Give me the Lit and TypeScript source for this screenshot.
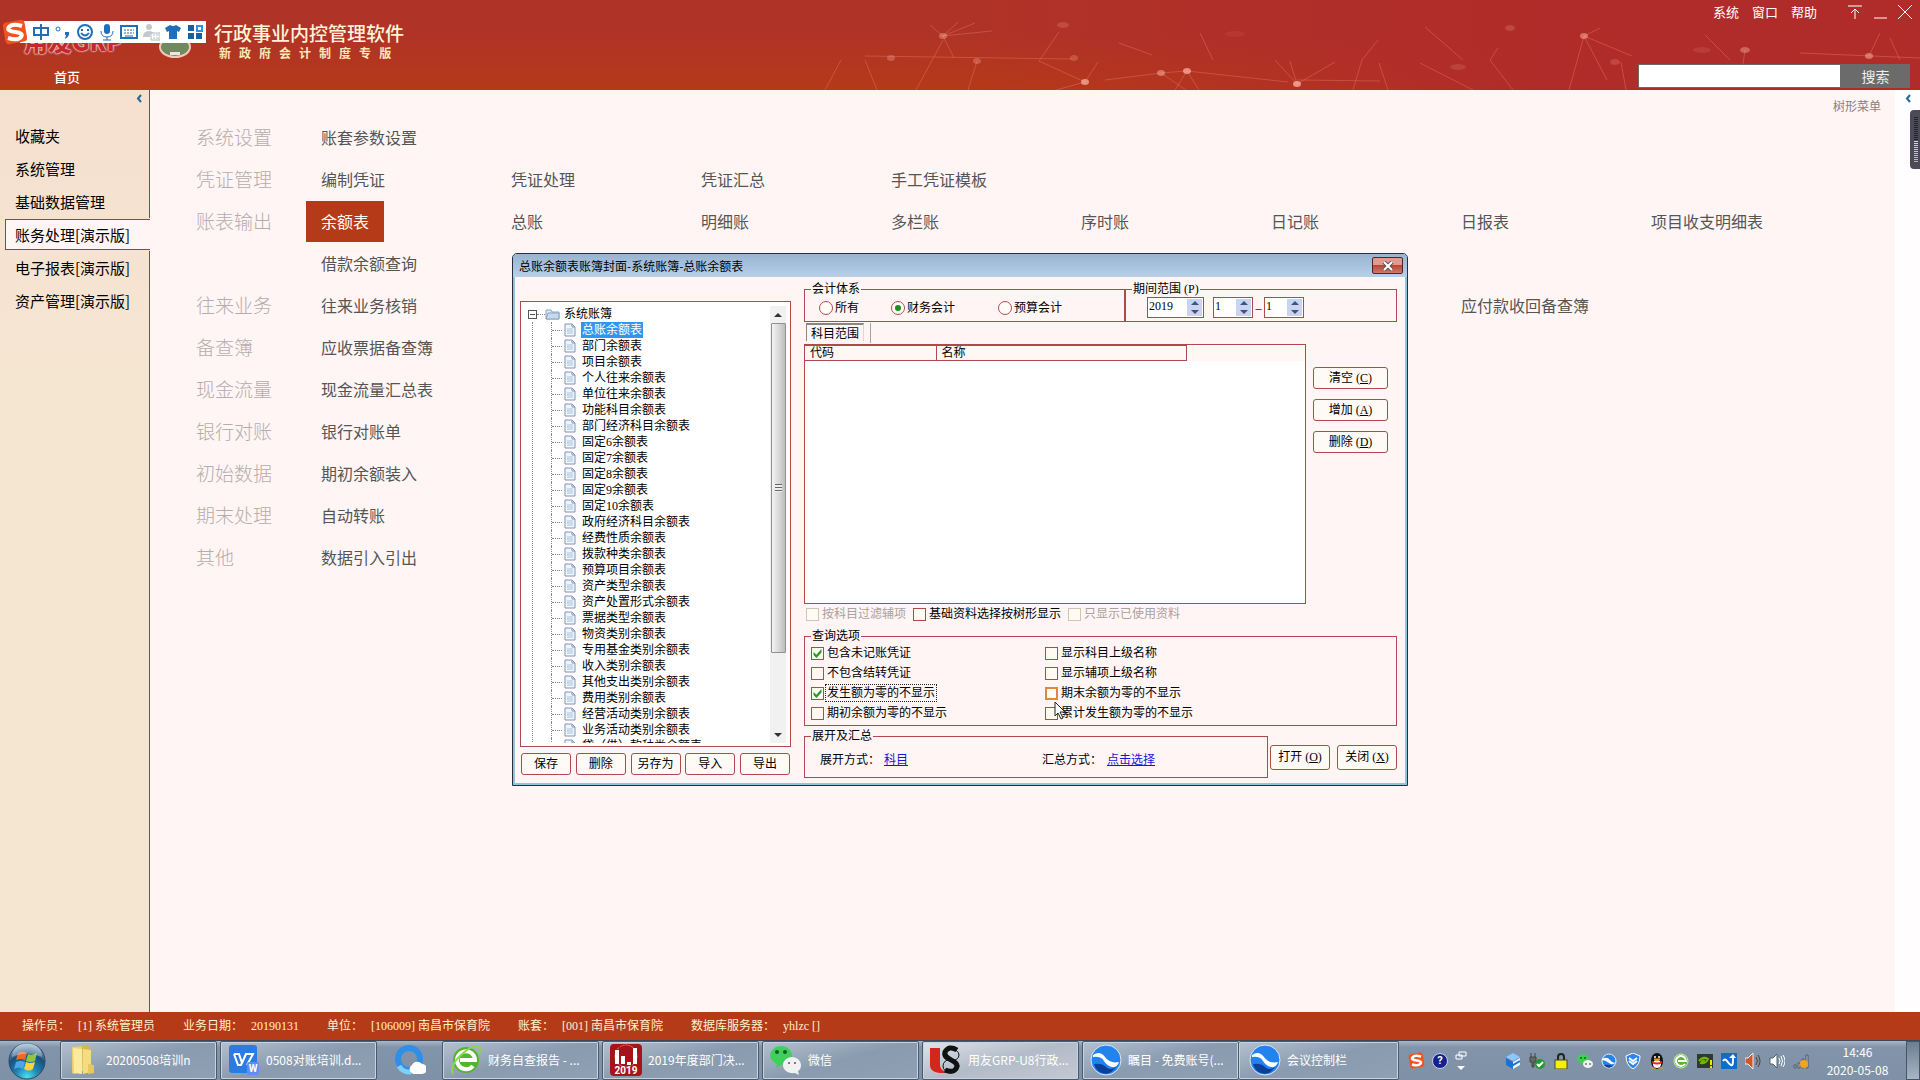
import { LitElement, html, css, svg, nothing } from "lit";
import { customElement, state } from "lit/decorators.js";
import { classMap } from "lit/directives/class-map.js";

const MODULES = ["收藏夹", "系统管理", "基础数据管理", "账务处理[演示版]", "电子报表[演示版]", "资产管理[演示版]"];

interface Group {
  title: string;
  items: string[];
}

const GROUPS: Group[] = [
  { title: "系统设置", items: ["账套参数设置"] },
  { title: "凭证管理", items: ["编制凭证", "凭证处理", "凭证汇总", "手工凭证模板"] },
  { title: "账表输出", items: ["余额表", "总账", "明细账", "多栏账", "序时账", "日记账", "日报表", "项目收支明细表"] },
  { title: "", items: ["借款余额查询"] },
  { title: "往来业务", items: ["往来业务核销", "", "", "", "", "", "应付款收回备查簿"] },
  { title: "备查簿", items: ["应收票据备查簿"] },
  { title: "现金流量", items: ["现金流量汇总表"] },
  { title: "银行对账", items: ["银行对账单"] },
  { title: "初始数据", items: ["期初余额装入"] },
  { title: "期末处理", items: ["自动转账"] },
  { title: "其他", items: ["数据引入引出"] },
];

const BOOKS = [
  "总账余额表", "部门余额表", "项目余额表", "个人往来余额表", "单位往来余额表", "功能科目余额表",
  "部门经济科目余额表", "固定6余额表", "固定7余额表", "固定8余额表", "固定9余额表", "固定10余额表",
  "政府经济科目余额表", "经费性质余额表", "拨款种类余额表", "预算项目余额表", "资产类型余额表",
  "资产处置形式余额表", "票据类型余额表", "物资类别余额表", "专用基金类别余额表", "收入类别余额表",
  "其他支出类别余额表", "费用类别余额表", "经营活动类别余额表", "业务活动类别余额表", "贷（借）款种类余额表",
];

const QUERY_OPTIONS = [
  { label: "包含未记账凭证", on: true },
  { label: "显示科目上级名称", on: false },
  { label: "不包含结转凭证", on: false },
  { label: "显示辅项上级名称", on: false },
  { label: "发生额为零的不显示", on: true, focus: true },
  { label: "期末余额为零的不显示", on: false, hot: true },
  { label: "期初余额为零的不显示", on: false },
  { label: "累计发生额为零的不显示", on: false },
];

const STATUS = [
  ["操作员：", "[1] 系统管理员"],
  ["业务日期：", "20190131"],
  ["单位：", "[106009] 南昌市保育院"],
  ["账套：", "[001] 南昌市保育院"],
  ["数据库服务器：", "yhlzc []"],
];

/* Decorative constellation on the right of the banner: [x1, y1, x2, y2]. */
const LINKS = [
  [123, 36, 110, 25], [123, 36, 138, 22], [123, 36, 155, 23], [123, 36, 172, 31], [123, 36, 134, 58],
  [123, 40, 96, 90], [219, 61, 239, 32], [219, 61, 265, 82], [45, 56, 252, 59], [265, 82, 236, 90],
  [265, 82, 278, 62], [367, 71, 468, 82], [341, 73, 285, 80], [341, 73, 367, 71], [367, 71, 355, 90],
  [367, 71, 379, 90], [341, 73, 366, 90], [477, 84, 455, 60], [477, 84, 470, 61], [477, 84, 515, 62],
  [477, 80, 560, 81], [21, 60, 5, 90], [45, 60, 57, 90], [157, 61, 148, 90], [299, 43, 332, 55],
  [380, 33, 393, 60], [605, 27, 643, 60], [600, 63, 653, 90], [764, 36, 780, 28], [764, 36, 812, 56],
  [764, 36, 749, 90], [764, 36, 787, 80], [670, 60, 693, 90], [670, 60, 678, 48], [558, 40, 542, 60],
  [542, 60, 533, 90], [559, 63, 568, 90], [801, 62, 806, 90], [1049, 56, 1060, 33], [1070, 38, 1080, 60],
  [980, 53, 1100, 58], [885, 35, 910, 60], [925, 50, 923, 64],
];
const NODES = [
  [123, 36, 4, 0.4], [71, 58, 4, 0.3], [157, 61, 4, 0.3], [243, 25, 6, 0.2], [254, 58, 4, 0.25], [265, 82, 4, 0.7],
  [341, 73, 4, 0.5], [367, 71, 4, 0.7], [477, 84, 4, 0.75], [764, 36, 4, 0.5], [690, 28, 5, 0.2], [638, 67, 8, 0.15],
  [925, 50, 5, 0.4], [1049, 56, 4, 0.5], [882, 50, 9, 0.12], [795, 62, 5, 0.2], [415, 34, 10, 0.07],
];

const orb = html`<svg viewBox="0 0 38 38" class="i38">
  <defs>
    <radialGradient id="og" cx=".5" cy=".95" r=".9">
      <stop offset="0" stop-color="#4fe0f4" /><stop offset=".35" stop-color="#1f86b4" />
      <stop offset=".7" stop-color="#1b4f7c" /><stop offset="1" stop-color="#8fb2cc" />
    </radialGradient>
  </defs>
  <circle cx="19" cy="19" r="18" fill="url(#og)" stroke="#284a68" />
  <path d="M10 11q5-3 9 0l-2 7q-4-2-9 0z" fill="#ee6a2c" />
  <path d="M20 12q4 2 9-1l-2 8q-4 2-9 0z" fill="#8ec63f" />
  <path d="M8 20q4-2 9 0l-2 7q-4-3-9 0z" fill="#4aa6e8" />
  <path d="M18 20q4 2 9 0l-2 7q-4 3-9 0z" fill="#fdd23c" />
  <path d="M4 15a15 15 0 0 1 30 0q-15-7-30 0z" fill="#fff" opacity=".3" />
</svg>`;

const folder = html`<svg viewBox="0 0 32 32" class="i32">
  <path d="M4 3l11-1v25l-9 3-2-1z" fill="#e9cf6b" /><path d="M14 2h8v24l-7 4z" fill="#d8b64a" />
  <path d="M5 4l9 1v25l-8-1z" fill="#faeaa0" /><path d="M15 5l8 1v22l-8 2z" fill="#f4dc83" />
  <path d="M20 20l6 1v8l-6 1z" fill="#e6c85c" />
</svg>`;

const wps = html`<svg viewBox="0 0 32 32" class="i32">
  <rect x="1" y="1" width="28" height="28" rx="3" fill="#2b7be4" />
  <path d="M6 10h5l3 9 4-9h7l-6 11M18 10l-5 11h-3L6 10" fill="none" stroke="#fff" stroke-width="2" />
  <rect x="19" y="18" width="12" height="13" rx="2" fill="#5b90f5" />
  <text x="25" y="28" text-anchor="middle" font-size="10" font-weight="700" fill="#fff" font-family="Roboto, sans-serif">W</text>
</svg>`;

const qbrowser = html`<svg viewBox="0 0 32 32" class="i32">
  <circle cx="15" cy="15" r="11" fill="none" stroke="#2f8fe8" stroke-width="6" />
  <path d="M5 22a12 12 0 0 0 12 6" fill="none" stroke="#7dd0fa" stroke-width="5" />
  <path d="M19 30a5 5 0 0 1-1-9 6 6 0 0 1 10-1 5 5 0 0 1 0 10z" fill="#fff" />
</svg>`;

const browserE = html`<svg viewBox="0 0 32 32" class="i32">
  <circle cx="16" cy="16" r="13" fill="#52b52c" />
  <path d="M23 22a9 9 0 1 1 2-6H10" fill="none" stroke="#fff" stroke-width="4" />
  <path d="M27 3q5-1 2 7M3 30q-4-8 8-19T28 3" fill="none" stroke="#8ed44d" stroke-width="2" />
</svg>`;

const report = html`<svg viewBox="0 0 32 32" class="i32">
  <rect width="32" height="32" rx="4" fill="#a6131b" />
  <circle cx="16" cy="12" r="11" fill="none" stroke="#e4868a" stroke-dasharray="2 1" />
  <path d="M7 6v14M13 12v8M19 18v3M25 4v16" stroke="#fff" stroke-width="4" />
  <text x="16" y="30" text-anchor="middle" font-size="10" font-weight="700" fill="#fff" font-family="Roboto, sans-serif">2019</text>
</svg>`;

const wechat = html`<svg viewBox="0 0 32 32" class="i32">
  <path d="M11 2c6 0 11 4 11 10s-5 9-11 9l-5 3 1-4C3 18 0 15 0 11 1 6 5 2 11 2z" fill="#3fd05c" />
  <circle cx="7" cy="8" r="2" fill="#165c25" /><circle cx="15" cy="8" r="2" fill="#165c25" />
  <path d="M22 13c5 0 9 4 9 8 0 3-1 5-3 6l1 4-4-2c-7 1-12-3-12-8 0-4 4-8 9-8z" fill="#f1f1f1" />
  <circle cx="19" cy="19" r="1" fill="#555" /><circle cx="25" cy="19" r="1" fill="#555" />
</svg>`;

const u8 = html`<svg viewBox="0 0 32 32" class="i32">
  <path d="M0 4h10v17q0 5 6 7v1Q0 30 0 21z" fill="#d5261b" />
  <ellipse cx="21" cy="11" rx="8" ry="6" fill="none" stroke="#111" stroke-width="1" />
  <ellipse cx="21" cy="22" rx="8" ry="7" fill="none" stroke="#111" stroke-width="1" />
  <path d="M27 6q-8-5-12 2c-2 7 12 8 12 14q-2 8-12 4" fill="none" stroke="#111" stroke-width="5" />
</svg>`;

const zhumu = html`<svg viewBox="0 0 32 32" class="i32">
  <circle cx="16" cy="16" r="15" fill="#2383ee" stroke="#dfe9f5" stroke-width="1" />
  <path d="M3 11q7-5 12 2t14 5q-2 6-7 5-5-1-8-6T3 13z" fill="#fff" />
  <path d="M4 20q8-1 12 3t10 0q-6 9-14 6-6-2-8-9z" fill="#0c3f9a" />
</svg>`;

const TASKS = [
  { icon: folder, label: "20200508培训n" },
  { icon: wps, label: "0508对账培训.d..." },
  { icon: qbrowser, label: "", bare: true },
  { icon: browserE, label: "财务自查报告 - ..." },
  { icon: report, label: "2019年度部门决..." },
  { icon: wechat, label: "微信" },
  { icon: u8, label: "用友GRP-U8行政...", active: true },
  { icon: zhumu, label: "瞩目 - 免费账号(..." },
  { icon: zhumu, label: "会议控制栏", last: true },
];

const sogou = (cls: string) => html`<svg viewBox="0 0 26 26" class=${cls}>
  <rect x="2" y="2" width="22" height="22" rx="4" fill="#f0531e" transform="rotate(-10 13 13)" />
  <path d="M20 7Q10 4 7 8t6 5 6 5-13 1" fill="none" stroke="#fff" stroke-width="4" />
</svg>`;

const TRAY = [
  svg`<path d="M8 0l7 4-7 4-7-4z" fill="#8cc8ff"/><path d="M1 5l7 4v7l-7-4z" fill="#1673d8"/><path d="M15 5L8 9v7l7-4z" fill="#e8f4ff"/><path d="M1 8l7 4 7-4" stroke="#1673d8" stroke-width="2" fill="none"/>`,
  svg`<path d="M2 0v4M6 0v4M1 4h6v5H5v5H3V9H1z" stroke="#444" fill="#666"/><circle cx="11" cy="11" r="5" fill="#219a2c"/><path d="M8 11l2 2 4-4" stroke="#fff" stroke-width="2" fill="none"/>`,
  svg`<path d="M5 8V4q0-3 3-3t3 3v4" fill="none" stroke="#222" stroke-width="2"/><rect x="2" y="7" width="12" height="9" fill="#f7f000" stroke="#444"/>`,
  svg`<ellipse cx="6" cy="6" rx="6" ry="5" fill="#3fcf53"/><ellipse cx="11" cy="11" rx="5" ry="4" fill="#eef3ee"/><circle cx="4" cy="5" r="1" fill="#1b5e20"/><circle cx="8" cy="5" r="1" fill="#1b5e20"/><circle cx="9" cy="11" r="1" fill="#777"/><circle cx="13" cy="11" r="1" fill="#777"/>`,
  svg`<circle cx="8" cy="8" r="7" fill="#2383ee" stroke="#e4eefa"/><path d="M1 6q5-3 8 1t6 2q-3 4-7 1T1 7z" fill="#fff"/><path d="M3 12q4-1 9 1-5 4-9-1z" fill="#123f8f"/>`,
  svg`<path d="M8 0l7 3q0 9-7 13Q1 12 1 3z" fill="#2f86ea" stroke="#fff"/><path d="M4 5l4 3 4-3M4 8l4 3 4-3" stroke="#fff" stroke-width="2" fill="none"/>`,
  svg`<ellipse cx="8" cy="8" rx="6" ry="8" fill="#111"/><ellipse cx="8" cy="11" rx="4" ry="4" fill="#fff"/><path d="M3 8q5 3 10 0v2q-5 3-10 0z" fill="#e22"/><circle cx="6" cy="4" r="1" fill="#fff"/><circle cx="10" cy="4" r="1" fill="#fff"/><path d="M5 6h6l-3 2zM2 15h5M9 15h5" fill="#f5a400" stroke="#f5a400"/>`,
  svg`<circle cx="8" cy="8" r="7" fill="#5cb531" stroke="#c9efad"/><path d="M12 11a5 5 0 1 1 1-3H5" fill="none" stroke="#fff" stroke-width="2"/>`,
  svg`<rect x="0" y="1" width="16" height="14" fill="#2e3a31"/><path d="M2 8q4-5 9-2-2 5-7 4 1-3 4-2" fill="none" stroke="#78b900" stroke-width="2"/><path d="M14 7v5M14 13v2" stroke="#fce300" stroke-width="2"/>`,
  svg`<rect width="16" height="16" fill="#0f6dc8"/><path d="M2 8q2-3 4 0t4 4 2-4V4" fill="none" stroke="#fff" stroke-width="2"/><path d="M8 5l4-4 3 4z" fill="#fff"/>`,
  svg`<path d="M0 5h3l5-5v16l-5-5H0z" fill="#d3552b" stroke="#eee"/><path d="M11 4q3 4 0 8M13 2q4 6 0 12" fill="none" stroke="#5b3b33"/>`,
  svg`<path d="M1 5h3l4-4v14l-4-4H1z" fill="#fff" stroke="#566"/><path d="M10 5q2 3 0 6M12 3q3 5 0 10M14 2q4 6 0 12" fill="none" stroke="#fff"/>`,
  svg`<path d="M1 12h2v3H1zM5 10h2v5H5zM9 6h2v9H9zM13 2h2v13h-2z" fill="#b9c4cf" stroke="#4c5a68"/><circle cx="11" cy="11" r="4" fill="#f6a21c"/>`,
];

const IME = [
  svg`<path d="M9 1v16M2 5h14v7H2z" fill="none" stroke="#1f6fba" stroke-width="2"/>`,
  svg`<circle cx="4" cy="6" r="2" fill="none" stroke="#1f6fba"/><path d="M11 9h4q1 4-4 7l1-4h-1z" fill="#1f6fba"/>`,
  svg`<circle cx="9" cy="9" r="7" fill="none" stroke="#1f6fba" stroke-width="2"/><path d="M6 6v2M12 6v2M5 10q4 5 8 0" fill="none" stroke="#1f6fba" stroke-width="2"/>`,
  svg`<rect x="6" y="1" width="6" height="10" rx="3" fill="#1f6fba"/><path d="M3 8q0 6 6 6t6-6M9 14v3M5 17h8" fill="none" stroke="#1f6fba" stroke-width="1"/>`,
  svg`<rect x="1" y="3" width="16" height="12" fill="none" stroke="#1f6fba" stroke-width="2"/><path d="M4 7h10M4 10h10" stroke="#1f6fba" stroke-dasharray="2 1"/><path d="M5 13h8" stroke="#1f6fba"/>`,
  svg`<circle cx="7" cy="4" r="3" fill="#c4c8cc"/><path d="M1 14q0-6 6-6 4 0 5 3H8v3z" fill="#c4c8cc"/><path d="M9 10h9v7H9zM11 12h2M11 15h2M14 12h3M14 15h3" fill="#fff" stroke="#b4bac0"/>`,
  svg`<path d="M6 2q3 2 6 0l5 3-2 4-2-1v8H5V8L3 9 1 5z" fill="#1f6fba"/>`,
  svg`<path d="M2 2h6v6H2zM2 10h6v6H2zM10 10h6v6h-6z" fill="#1c5f9e"/><rect x="11" y="3" width="5" height="5" fill="none" stroke="#2f8fe0" stroke-width="2"/>`,
];

const fileIcon = html`<svg class="file" viewBox="0 0 12 14">
  <path d="M1 1h7l3 3v9H1z" fill="#eef5fc" stroke="#8296b0" /><path d="M8 1v3h3" fill="none" stroke="#8296b0" />
  <path d="M3 6h6M3 8h6M3 10h6" stroke="#a9c3df" />
</svg>`;

@customElement("app-root")
export class AppRoot extends LitElement {
  @state() private module = 3;
  @state() private book = 0;

  static styles = css`
    :host {
      --line: #b04a4a;
      --brand: #b53a17;
      --paper: #fff5f4;
      --song: "Liberation Serif", "Noto Sans CJK SC", serif;
      display: flex;
      flex-direction: column;
      min-height: 100vh;
      position: relative;
      overflow: hidden;
      background: var(--paper);
      font-family: "Noto Sans CJK SC", sans-serif;
      color: #000;
    }
    * { box-sizing: border-box; }
    button, input { font: inherit; color: inherit; margin: 0; }
    button { cursor: pointer; padding: 0; border: 0; background: none; }
    ul { list-style: none; margin: 0; padding: 0; }
    svg { display: block; flex: none; }

    .banner {
      position: relative;
      display: flex;
      justify-content: space-between;
      height: 90px;
      color: #fff;
      background: linear-gradient(90deg, #b4391b00 50%, #b02c2a 80%), linear-gradient(#b03327 40%, #b53a17);
    }
    .stars { position: absolute; right: 0; top: 0; width: 1100px; height: 90px; }
    .brand { display: grid; grid-template-columns: 192px auto; column-gap: 22px; align-content: start; padding-top: 20px; }
    .logo { display: flex; justify-content: space-between; align-items: center; padding-left: 24px;
      font-size: 24px; line-height: 28px; font-weight: 900; color: #c8262c; white-space: nowrap; text-shadow: 0 0 2px #fff, 0 0 2px #fff; }
    .emblem { width: 34px; height: 36px; margin: -4px 0; }
    .names { display: flex; flex-direction: column; padding-top: 1px; }
    .name { font-size: 19px; line-height: 24px; font-weight: 500; color: #fff3d8; margin: 0; }
    .edition { display: flex; gap: 8px; padding-left: 5px; font-size: 12px; line-height: 16px; font-weight: 700; color: #fbe9b8; }
    .home { grid-column: 1; justify-self: start; margin: 4px 0 0 54px; font-size: 13px; line-height: 24px; font-weight: 500; color: #fff; text-decoration: none; }
    .corner { position: relative; display: flex; flex-direction: column; align-items: flex-end; justify-content: space-between; padding: 2px 10px 2px 0; }
    .tools { display: flex; align-items: center; gap: 13px; font-size: 13px; line-height: 20px; }
    .tools .space { width: 5px; }
    .win svg { width: 14px; height: 14px; margin-right: -2px; }
    .search { display: flex; height: 24px; }
    .search input { width: 203px; border: 1px solid #6b6b6b; background: #fff; outline: none; color: #333; padding: 0 4px; font-size: 13px; }
    .search button { width: 69px; background: #6b6b6b; color: #eee; font-size: 14px; line-height: 24px; }

    .ime { position: absolute; left: 2px; top: 19px; display: flex; align-items: center; }
    .ime .s26 { width: 26px; height: 26px; position: relative; z-index: 1; }
    .keys { display: flex; gap: 4px; background: #fff; height: 22px; align-items: center; padding: 0 2px 0 12px; margin-left: -8px; }
    .keys svg { width: 18px; height: 18px; }

    .main { flex: 1; display: flex; }
    .side { width: 150px; flex: none; display: flex; flex-direction: column; background: linear-gradient(#f6dfcf, #f5e6d2 30%); }
    .fold { align-self: stretch; height: 29px; border-right: 1px solid var(--brand); display: flex; justify-content: flex-end; padding: 4px 7px; }
    .fold svg, .edge svg { width: 6px; height: 9px; }
    .mods { display: flex; flex-direction: column; }
    .mod { height: 33px; display: flex; align-items: center; padding-left: 5px; border-right: 1px solid var(--brand); }
    .mod button { width: 100%; height: 31px; text-align: left; padding-left: 10px; font-size: 15px; line-height: 31px; white-space: nowrap; }
    .mod.on { border-right: 0; }
    .mod.on button { background: var(--paper); border: 1px solid var(--brand); border-right: 0; line-height: 29px; padding-left: 9px; }
    .side .rest { flex: 1; border-right: 1px solid var(--brand); }

    .content { flex: 1; min-width: 0; padding: 26px 0 0 46px; }
    .group { display: grid; grid-template-columns: 110px repeat(8, 190px); height: 42px; align-items: center; }
    .group h2 { margin: 0; font-size: 19px; line-height: 28px; font-weight: 300; color: #b5adad; }
    .entry { justify-self: start; padding: 0 15px; height: 41px; font-size: 16px; line-height: 41px; color: #555; text-decoration: none; white-space: nowrap; }
    .entry.on { background: var(--brand); color: #fff; }
    .rail { flex: none; display: flex; align-items: flex-start; }
    .treelink { font-size: 12px; line-height: 16px; color: #8b8080; padding: 8px 14px; text-decoration: none; }
    .edge { align-self: stretch; width: 25px; background: #fffdfd; display: flex; flex-direction: column; align-items: flex-end; }
    .edge svg { margin: 4px 9px 7px 0; }
    .meter { width: 10px; height: 59px; border-radius: 4px 0 0 4px; background: #4b4b57; padding: 7px 2px 7px 4px; }
    .meter div { height: 45px; background: repeating-linear-gradient(#4b4b5700 0 1px, #4b4b57 1px 2px), linear-gradient(#22222c 50%, #e6e67a 50%, #58e0b0); }

    .status { display: flex; gap: 28px; background: var(--brand); color: #fff2cf; padding: 0 22px; font: 12px/28px var(--song); }
    .status span { display: flex; gap: 8px; white-space: pre; }

    .taskbar { display: flex; height: 40px; background: linear-gradient(#a9b6c6, #8294aa 6px, #7f91a7); border-top: 1px solid #3c4757; color: #fff; }
    .start { width: 54px; display: flex; justify-content: center; align-items: center; margin-right: 6px; }
    .i38 { width: 38px; height: 38px; }
    .i32 { width: 32px; height: 32px; }
    .tasks { display: flex; gap: 3px; }
    .task { width: 157px; display: flex; align-items: center; gap: 6px; padding: 0 0 2px 7px; font-size: 12px; white-space: nowrap;
      border: 1px solid #4a596b; border-radius: 2px; box-shadow: inset 0 0 0 1px #c9d3de; background: linear-gradient(165deg, #b4c0ce, #8a9bb0 50%, #8fa0b4); }
    .task.on { background: linear-gradient(165deg, #dfe4ea, #b2bbc8 50%, #c3c9d3); }
    .task.bare { width: 59px; border: 0; box-shadow: none; background: none; padding-left: 14px; }
    .task.last { margin-left: -3px; border-left: 0; padding-left: 10px; width: 160px; }
    .tray { margin-left: auto; display: flex; align-items: center; }
    .lang { display: flex; align-items: center; gap: 7px; margin-right: 38px; }
    .s16 { width: 17px; height: 17px; }
    .q { width: 16px; height: 16px; border-radius: 50%; background: #14208c; border: 1px solid #c9d0ea; font: 700 11px/14px Roboto, sans-serif; text-align: center; }
    .mini { width: 12px; height: 20px; }
    .icons { display: flex; gap: 8px; }
    .icons svg { width: 16px; height: 16px; }
    .clock { width: 97px; text-align: center; font-size: 12px; line-height: 18px; }
    .desk { align-self: stretch; width: 14px; border: 1px solid #45556a; background: linear-gradient(#6d7d91, #a9b5c4); }

    .dialog { position: absolute; left: 512px; top: 253px; width: 896px; border: 1px solid #26303c; border-radius: 5px 5px 0 0; background: var(--paper);
      box-shadow: inset 0 0 0 2px #8fc4dc; font: 12px/14px var(--song); }
    .title { display: flex; justify-content: space-between; align-items: center; height: 23px; padding: 0 4px 0 6px; border-radius: 4px 4px 0 0;
      background: linear-gradient(#97b4d0, #b8d0ea); }
    .title h1 { margin: 0; font: 12px/16px "Noto Sans CJK SC", sans-serif; }
    .close { width: 31px; height: 17px; border: 1px solid #5c1f24; border-radius: 2px; background: linear-gradient(#e29a90 50%, #b8453a 50%, #d07a66); display: grid; place-items: center; }
    .close svg { width: 12px; height: 10px; }
    .body { display: flex; gap: 13px; padding: 5px 10px 7px 7px; }
    .left { width: 271px; flex: none; display: flex; flex-direction: column; justify-content: space-between; padding: 19px 0 3px; }
    .tree { height: 446px; border: 1px solid var(--line); background: #fff; padding: 4px 4px 3px 0; display: flex; }
    .nodes { flex: 1; overflow: hidden; }
    .root { display: flex; align-items: center; height: 16px; padding-left: 7px; }
    .box { width: 9px; height: 9px; border: 1px solid #555; background: linear-gradient(#555, #555) center / 5px 1px no-repeat #fff; }
    .root i { width: 8px; border-top: 1px dotted #888; }
    .root svg { width: 15px; height: 12px; margin-right: 4px; }
    .kids { margin-left: 11px; padding-left: 18px; border-left: 1px dotted #888; }
    .kid { display: flex; align-items: center; height: 16px; border-left: 1px dotted #888; }
    .kid i { width: 10px; border-top: 1px dotted #888; margin-right: 2px; }
    .file { width: 12px; height: 14px; margin-right: 5px; }
    .kid button { height: 16px; line-height: 16px; padding: 0 1px; white-space: nowrap; }
    .kid.on button { background: #3296f0; color: #fff; }
    .bar { width: 16px; background: #f1f1f1; display: flex; flex-direction: column; align-items: center; }
    .bar .up, .bar .down { width: 16px; height: 17px; display: grid; place-items: center; }
    .bar svg { width: 8px; height: 4px; }
    .thumb { width: 15px; height: 330px; border: 1px solid #909090; border-radius: 1px; background: linear-gradient(90deg, #f3f3f3, #dadada 50%, #bdbdbd); display: grid; place-items: center; }
    .grip { width: 7px; height: 8px; background: repeating-linear-gradient(#666 0 1px, #eee 1px 3px); }
    .bar .down { margin-top: auto; }
    .row { display: flex; justify-content: space-between; padding: 0 1px; }
    .btn { border: 1px solid var(--line); border-radius: 3px; background: #fffaf6; text-align: center; height: 22px; line-height: 20px; white-space: nowrap; }
    .row .btn { width: 50px; }

    .right { flex: 1; display: flex; flex-direction: column; }
    fieldset { border: 1px solid var(--line); margin: 0; padding: 0; min-width: 0; }
    legend { margin-left: 6px; padding: 0 1px; line-height: 14px; }
    .pair { display: flex; }
    .system { width: 321px; }
    .period { flex: 1; }
    .radios { display: flex; padding: 2px 0 3px 14px; }
    .radios label { display: flex; align-items: center; gap: 2px; height: 20px; width: 72px; white-space: nowrap; }
    .radios label + label { width: 107px; }
    input[type="radio"] { appearance: none; width: 14px; height: 14px; border: 1px solid var(--line); border-radius: 50%; background: #fffdf8; display: grid; place-items: center; }
    input[type="radio"]:checked::before { content: ""; width: 6px; height: 6px; border-radius: 50%; background: #0d9420; }
    .spins { display: flex; align-items: center; padding: 1px 0 3px 21px; }
    .spin { display: flex; width: 40px; height: 21px; border: 1px solid var(--line); background: #fff; padding: 1px; }
    .spin.year { width: 57px; margin-right: 9px; }
    .spin input { flex: 1; width: 10px; border: 0; outline: 0; padding: 0 0 4px; background: none; }
    .dash { width: 11px; text-align: center; }
    .arrows { display: flex; flex-direction: column; width: 15px; background: #c8d4f4; }
    .arrows button { flex: 1; display: grid; place-items: center; }
    .arrows svg { width: 8px; height: 4px; }
    .tabs { display: flex; height: 22px; align-items: flex-start; padding: 1px 0 0 2px; }
    .tab { height: 18px; width: 58px; line-height: 18px; border-top: 2px solid #8d8585; border-left: 1px solid #8d8585; border-right: 1px solid #e0d6d6; }
    .sep { width: 7px; height: 20px; border-right: 1px solid #a9a0a0; }
    .scope { display: flex; gap: 7px; }
    .list { width: 502px; height: 260px; border: 1px solid var(--line); background: #fff; }
    table { width: 100%; border-collapse: collapse; table-layout: fixed; }
    th { border: 1px solid var(--line); border-left: 0; font-weight: 400; text-align: left; padding: 0 5px; line-height: 14px; background: #fff7f4; }
    th.code { width: 131px; }
    th.nm { width: 250px; }
    td.pad { background: #fff7f4; padding: 0; }
    .ops { display: flex; flex-direction: column; gap: 10px; padding-top: 23px; }
    .ops .btn { width: 75px; }
    .check { display: flex; align-items: center; gap: 2px; white-space: nowrap; }
    .check span { padding: 0 1px; line-height: 16px; }
    .check.dim { color: #a9a2a0; }
    .check.focus span { outline: 1px dotted #222; }
    input[type="checkbox"] { appearance: none; width: 13px; height: 13px; border: 1px solid var(--line); background: #fffaf2; }
    .dim input[type="checkbox"] { border-color: #cfc4b8; }
    .hot input[type="checkbox"] { border: 2px solid #d98a3c; }
    input[type="checkbox"]:checked::before { content: ""; display: block; width: 11px; height: 11px; background: #229a2c; clip-path: polygon(14% 40%, 40% 65%, 86% 14%, 86% 45%, 40% 95%, 14% 68%); }
    .filters { display: flex; gap: 6px; padding: 2px 0 7px 2px; }
    .options { display: grid; grid-template-columns: 234px 1fr; gap: 2px 0; padding: 1px 6px 3px; }
    .options .check { height: 18px; justify-self: start; }
    .foot { display: flex; gap: 2px; padding-top: 3px; }
    .expand { flex: 1; }
    .ways { display: grid; grid-template-columns: 64px 158px 65px auto; justify-content: start; padding: 9px 15px; line-height: 16px; }
    .ways a { color: #1a14d8; }
    .end { display: flex; gap: 7px; padding-top: 16px; }
    .end .btn { width: 60px; height: 25px; line-height: 23px; }
    .cursor { position: absolute; left: 541px; top: 447px; width: 12px; height: 19px; }
  `;

  private stars() {
    return html`<svg class="stars" viewBox="0 0 1100 90">
      ${LINKS.map(([a, b, c, d]) => svg`<line x1=${a} y1=${b} x2=${c} y2=${d} stroke="#e8806e" stroke-opacity=".4" />`)}
      ${NODES.map(([x, y, r, o]) => svg`<ellipse cx=${x} cy=${y} rx=${r} ry="3" fill="#ffb4a4" fill-opacity=${o} />`)}
    </svg>`;
  }

  private chevron() {
    return html`<svg viewBox="0 0 6 9"><path d="M5 1L2 4.500 5 8" fill="none" stroke="#1f6a9c" stroke-width="2" /></svg>`;
  }

  private banner() {
    return html`<header class="banner">
      ${this.stars()}
      <div class="brand">
        <div class="logo"><span>用友GRP</span>
          <svg class="emblem" viewBox="0 0 34 36">
            <ellipse cx="17" cy="24" rx="15" ry="10" fill="#6f8a5e" stroke="#f0c9b8" stroke-width="2" />
            <path d="M12 29h10v3H12z" fill="#f4e3dc" />
            <circle cx="15" cy="5" r="3" fill="none" stroke="#e3a391" stroke-width="2" /><circle cx="23" cy="6" r="3" fill="none" stroke="#e3a391" stroke-width="2" />
          </svg>
        </div>
        <div class="names">
          <p class="name">行政事业内控管理软件</p>
          <div class="edition">${[..."新政府会计制度专版"].map((c) => html`<span>${c}</span>`)}</div>
        </div>
        <a class="home" href="#home">首页</a>
      </div>
      <div class="corner">
        <div class="tools">
          <button>系统</button><button>窗口</button><button>帮助</button>
          <span class="space"></span>
          <button class="win" aria-label="置顶"><svg viewBox="0 0 14 14"><path d="M0 1h14M7 14V4M3 8l4-4 4 4" fill="none" stroke="#fff" /></svg></button>
          <button class="win" aria-label="最小化"><svg viewBox="0 0 14 14"><path d="M1 13h13" stroke="#fff" /></svg></button>
          <button class="win" aria-label="关闭"><svg viewBox="0 0 14 14"><path d="M0 0l14 14M14 0L0 14" stroke="#fff" /></svg></button>
        </div>
        <form class="search" @submit=${(e: Event) => e.preventDefault()}>
          <input type="text" aria-label="搜索内容" /><button>搜索</button>
        </form>
      </div>
      <div class="ime">${sogou("s26")}<div class="keys">${IME.map((k) => html`<svg viewBox="0 0 18 18">${k}</svg>`)}</div></div>
    </header>`;
  }

  private mainArea() {
    return html`<div class="main">
      <nav class="side">
        <button class="fold" aria-label="收起">${this.chevron()}</button>
        <ul class="mods">
          ${MODULES.map((m, i) => html`<li class=${classMap({ mod: true, on: i === this.module })}>
            <button @click=${() => (this.module = i)}>${m}</button>
          </li>`)}
        </ul>
        <div class="rest"></div>
      </nav>
      <main class="content">
        ${GROUPS.map((g) => html`<section class="group">
          <h2>${g.title}</h2>
          ${g.items.map((t) => t ? html`<a href="#entry" class=${classMap({ entry: true, on: t === "余额表" })}>${t}</a>` : html`<span></span>`)}
        </section>`)}
      </main>
      <aside class="rail">
        <a class="treelink" href="#tree">树形菜单</a>
        <div class="edge">${this.chevron()}<div class="meter"><div></div></div></div>
      </aside>
    </div>`;
  }

  private spin(value: string, label: string, year = false) {
    return html`<div class=${classMap({ spin: true, year })}>
      <input type="text" inputmode="numeric" aria-label=${label} .value=${value} />
      <div class="arrows">
        <button aria-label="增"><svg viewBox="0 0 8 4"><path d="M0 4l4-4 4 4z" fill="#46536e" /></svg></button>
        <button aria-label="减"><svg viewBox="0 0 8 4"><path d="M0 0l4 4 4-4z" fill="#46536e" /></svg></button>
      </div>
    </div>`;
  }

  private check(o: { label: string; on?: boolean; focus?: boolean; hot?: boolean; dim?: boolean }) {
    return html`<label class=${classMap({ check: true, focus: !!o.focus, hot: !!o.hot, dim: !!o.dim })}>
      <input type="checkbox" .checked=${!!o.on} ?disabled=${!!o.dim} /><span>${o.label}</span>
    </label>`;
  }

  private tree() {
    return html`<div class="tree">
      <div class="nodes">
        <div class="root"><span class="box"></span><i></i>
          <svg viewBox="0 0 15 12"><path d="M1 2h5l1 2h7v7H1z" fill="#dce9f5" stroke="#8ba3bd" /><path d="M3 5h11v6H1z" fill="#c6daee" stroke="#8ba3bd" /></svg>
          <span>系统账簿</span>
        </div>
        <ul class="kids">
          ${BOOKS.map((b, i) => html`<li class=${classMap({ kid: true, on: i === this.book })}>
            <i></i>${fileIcon}<button @click=${() => (this.book = i)}>${b}</button>
          </li>`)}
        </ul>
      </div>
      <div class="bar">
        <div class="up"><svg viewBox="0 0 8 4"><path d="M0 4l4-4 4 4z" fill="#333" /></svg></div>
        <div class="thumb"><div class="grip"></div></div>
        <div class="down"><svg viewBox="0 0 8 4"><path d="M0 0l4 4 4-4z" fill="#333" /></svg></div>
      </div>
    </div>`;
  }

  /* A push button whose shortcut letter is underlined. */
  private keyed(t: string) {
    return html`<button class="btn">${t.slice(0, -2)}<u>${t.slice(-2, -1)}</u>)</button>`;
  }

  private dialog() {
    return html`<section class="dialog" role="dialog" aria-labelledby="dlg">
      <div class="title">
        <h1 id="dlg">总账余额表账簿封面-系统账簿-总账余额表</h1>
        <button class="close" aria-label="关闭"><svg viewBox="0 0 12 10"><path d="M2 1l8 8M10 1L2 9" stroke="#555" stroke-width="4" /><path d="M2 1l8 8M10 1L2 9" stroke="#fff" stroke-width="2" /></svg></button>
      </div>
      <div class="body">
        <div class="left">
          ${this.tree()}
          <div class="row">${["保存", "删除", "另存为", "导入", "导出"].map((t) => html`<button class="btn">${t}</button>`)}</div>
        </div>
        <div class="right">
          <div class="pair">
            <fieldset class="system">
              <legend>会计体系</legend>
              <div class="radios">
                ${["所有", "财务会计", "预算会计"].map((t, i) => html`<label><input type="radio" name="sys" ?checked=${i === 1} />${t}</label>`)}
              </div>
            </fieldset>
            <fieldset class="period">
              <legend>期间范围 (P)</legend>
              <div class="spins">
                ${this.spin("2019", "年度", true)}${this.spin("1", "开始月")}<span class="dash">–</span>${this.spin("1", "结束月")}
              </div>
            </fieldset>
          </div>
          <div class="tabs"><button class="tab">科目范围</button><span class="sep"></span></div>
          <div class="scope">
            <div class="list">
              <table><thead><tr><th class="code">代码</th><th class="nm">名称</th><td class="pad"></td></tr></thead></table>
            </div>
            <div class="ops">${["清空 (C)", "增加 (A)", "删除 (D)"].map((t) => this.keyed(t))}</div>
          </div>
          <div class="filters">
            ${this.check({ label: "按科目过滤辅项", dim: true })}
            ${this.check({ label: "基础资料选择按树形显示" })}
            ${this.check({ label: "只显示已使用资料", dim: true })}
          </div>
          <fieldset>
            <legend>查询选项</legend>
            <div class="options">${QUERY_OPTIONS.map((o) => this.check(o))}</div>
          </fieldset>
          <div class="foot">
            <fieldset class="expand">
              <legend>展开及汇总</legend>
              <div class="ways"><span>展开方式：</span><a href="#subject">科目</a><span>汇总方式：</span><a href="#pick">点击选择</a></div>
            </fieldset>
            <div class="end">${["打开 (O)", "关闭 (X)"].map((t) => this.keyed(t))}</div>
          </div>
        </div>
      </div>
      <svg class="cursor" viewBox="0 0 12 19"><path d="M1 1v14l3-3 3 6 2-1-3-6h5z" fill="#fff" stroke="#222" /></svg>
    </section>`;
  }

  private taskbar() {
    return html`<footer class="taskbar">
      <button class="start" aria-label="开始">${orb}</button>
      <div class="tasks">
        ${TASKS.map((t) => html`<button class=${classMap({ task: true, bare: !!t.bare, on: !!t.active, last: !!t.last })} aria-label=${t.label || "浏览器"}>
          ${t.icon}${t.label ? html`<span>${t.label}</span>` : nothing}
        </button>`)}
      </div>
      <div class="tray">
        <div class="lang">${sogou("s16")}<span class="q">?</span>
          <svg class="mini" viewBox="0 0 12 20"><path d="M4 1h7v4H4zM1 4h6v4H1z" fill="#8294aa" stroke="#fff" /><path d="M2 15h8l-4 4z" fill="#fff" /></svg>
        </div>
        <div class="icons">${TRAY.map((i) => html`<svg viewBox="0 0 16 16">${i}</svg>`)}</div>
        <div class="clock"><div>14:46</div><div>2020-05-08</div></div>
        <button class="desk" aria-label="显示桌面"></button>
      </div>
    </footer>`;
  }

  render() {
    return html`${this.banner()}
      ${this.mainArea()}
      <div class="status">${STATUS.map(([k, v]) => html`<span><span>${k}</span><span>${v}</span></span>`)}</div>
      ${this.taskbar()} ${this.dialog()}`;
  }
}
